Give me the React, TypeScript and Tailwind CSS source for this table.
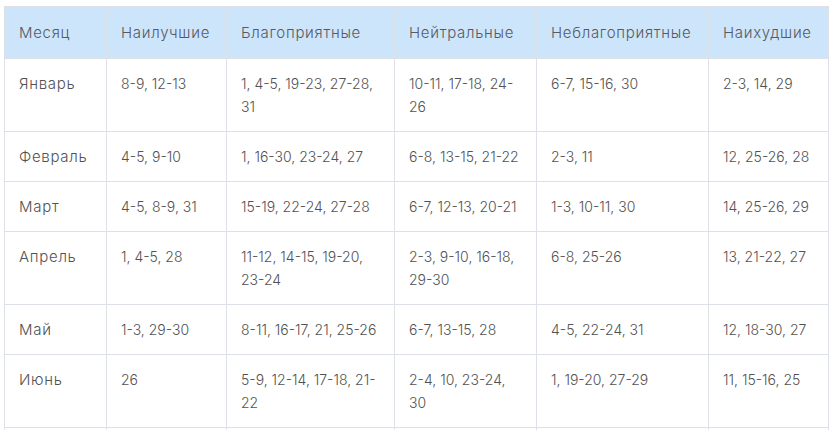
import React from "react";

const headers = [
  "Месяц",
  "Наилучшие",
  "Благоприятные",
  "Нейтральные",
  "Неблагоприятные",
  "Наихудшие",
];

const rows: string[][] = [
  ["Январь", "8-9, 12-13", "1, 4-5, 19-23, 27-28, 31", "10-11, 17-18, 24-26", "6-7, 15-16, 30", "2-3, 14, 29"],
  ["Февраль", "4-5, 9-10", "1, 16-30, 23-24, 27", "6-8, 13-15, 21-22", "2-3, 11", "12, 25-26, 28"],
  ["Март", "4-5, 8-9, 31", "15-19, 22-24, 27-28", "6-7, 12-13, 20-21", "1-3, 10-11, 30", "14, 25-26, 29"],
  ["Апрель", "1, 4-5, 28", "11-12, 14-15, 19-20, 23-24", "2-3, 9-10, 16-18, 29-30", "6-8, 25-26", "13, 21-22, 27"],
  ["Май", "1-3, 29-30", "8-11, 16-17, 21, 25-26", "6-7, 13-15, 28", "4-5, 22-24, 31", "12, 18-30, 27"],
  ["Июнь", "26", "5-9, 12-14, 17-18, 21-22", "2-4, 10, 23-24, 30", "1, 19-20, 27-29", "11, 15-16, 25"],
];

const widths = ["w-[102px]", "w-[120px]", "w-[168px]", "w-[142px]", "w-[172px]", "w-[120px]"];

export default function App() {
  return (
    <div
      className="w-[833px] h-[430px] overflow-hidden bg-white pl-[4px] pt-[6px]"
      style={{ fontFamily: "Inter, 'Noto Sans', sans-serif" }}
    >
      <table className="w-[824px] table-fixed border-collapse text-[14px] leading-[23px] font-light text-[#525252]">
        <colgroup>
          {widths.map((w, i) => (
            <col key={i} className={w} />
          ))}
        </colgroup>
        <thead>
          <tr className="bg-[#cce5fb]">
            {headers.map((h) => (
              <th
                key={h}
                className="border border-[#dde1e7] px-[14px] py-[14px] text-left text-[15px] tracking-[0.7px] font-light text-[#555a63] align-top"
              >
                {h}
              </th>
            ))}
          </tr>
        </thead>
        <tbody>
          {rows.map((r) => (
            <tr key={r[0]}>
              {r.map((c, i) => (
                <td
                  key={i}
                  className={
                    i === 0
                      ? "border border-[#dde1e7] px-[14px] py-[13px] align-top text-[15px] tracking-[0.7px]"
                      : "border border-[#dde1e7] px-[14px] py-[13px] align-top"
                  }
                >
                  {c}
                </td>
              ))}
            </tr>
          ))}
          <tr className="h-[49px]">
            {widths.map((_, i) => (
              <td key={i} className="border border-[#dde1e7]" />
            ))}
          </tr>
        </tbody>
      </table>
    </div>
  );
}
